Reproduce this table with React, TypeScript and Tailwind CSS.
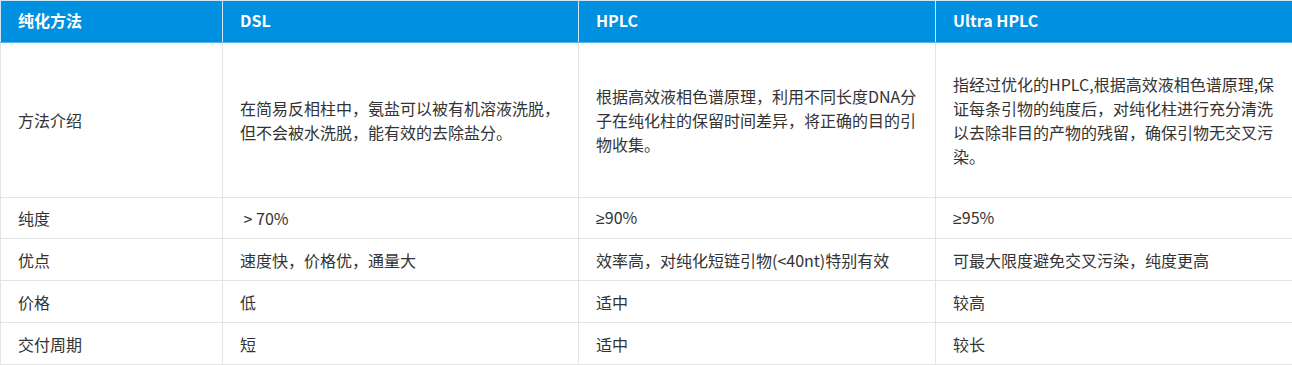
import type { ReactNode } from 'react';

const headers = ['纯化方法', 'DSL', 'HPLC', 'Ultra HPLC'];

const ge = <span className="font-['Liberation_Sans',sans-serif]">≥</span>;

const rows: { h: string; cells: ReactNode[] }[] = [
  {
    h: 'h-[155px]',
    cells: [
      '方法介绍',
      '在简易反相柱中，氨盐可以被有机溶液洗脱，但不会被水洗脱，能有效的去除盐分。',
      '根据高效液相色谱原理，利用不同长度DNA分子在纯化柱的保留时间差异，将正确的目的引物收集。',
      '指经过优化的HPLC,根据高效液相色谱原理,保证每条引物的纯度后，对纯化柱进行充分清洗以去除非目的产物的残留，确保引物无交叉污染。',
    ],
  },
  { h: 'h-[41px]', cells: ['纯度', '\u00a0> 70%', <>{ge}90%</>, <>{ge}95%</>] },
  { h: 'h-[42px]', cells: ['优点', '速度快，价格优，通量大', '效率高，对纯化短链引物(<40nt)特别有效', '可最大限度避免交叉污染，纯度更高'] },
  { h: 'h-[42px]', cells: ['价格', '低', '适中', '较高'] },
  { h: 'h-[42px]', cells: ['交付周期', '短', '适中', '较长'] },
];

const widths = ['w-[222px]', 'w-[356px]', 'w-[357px]', 'w-[357px]'];

export default function App() {
  return (
    <div className="w-[1292px] h-[365px] bg-white font-['Noto_Sans_CJK_SC','Noto_Sans',sans-serif] text-[16px] leading-[24px] text-[#333]">
      <table className="w-full table-fixed border-collapse">
        <colgroup>
          {widths.map((w, i) => (
            <col key={i} className={w} />
          ))}
        </colgroup>
        <thead>
          <tr className="h-[42px] bg-[#0090e0]">
            {headers.map((t, i) => (
              <th
                key={i}
                className="border border-[#cfe6f5] border-b-[#5ab3ea] px-[17px] pb-[3px] text-left align-middle font-bold text-white"
              >
                {t}
              </th>
            ))}
          </tr>
        </thead>
        <tbody>
          {rows.map((r, ri) => (
            <tr key={ri} className={r.h}>
              {r.cells.map((c, ci) => (
                <td key={ci} className="border border-[#e4e4e4] px-[17px] align-middle">
                  {c}
                </td>
              ))}
            </tr>
          ))}
        </tbody>
      </table>
    </div>
  );
}
